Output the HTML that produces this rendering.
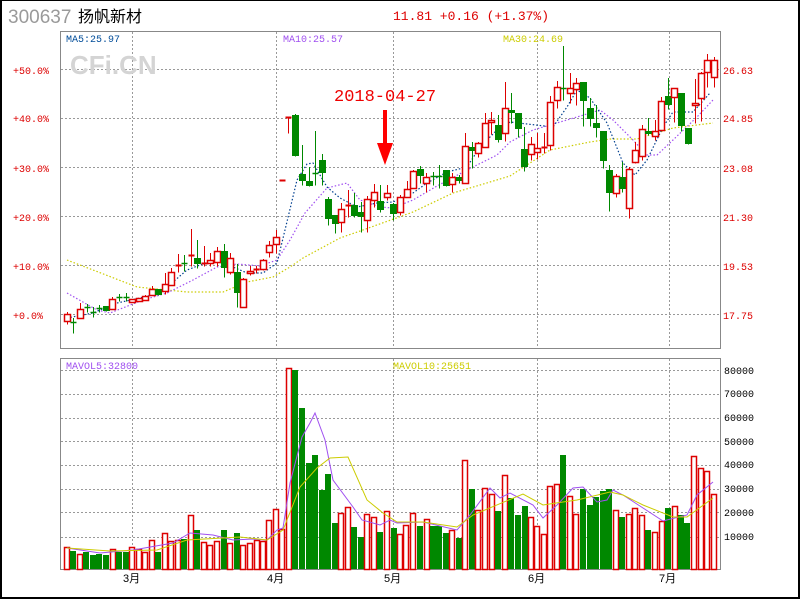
<!DOCTYPE html>
<html><head><meta charset="utf-8"><style>
html,body{margin:0;padding:0;background:#fff;}
#w{position:relative;width:796px;height:596px;border:2px solid #000;border-top:1px solid #000;overflow:hidden;}
svg{position:absolute;left:-2px;top:-1px;}
</style></head><body><div id="w">
<svg id="s" width="800" height="600" xmlns="http://www.w3.org/2000/svg" font-family="Liberation Mono, monospace">
<text x="8" y="23" font-family="Liberation Sans, sans-serif" font-size="19" fill="#9a9a9a">300637</text>
<text x="78" y="22" font-family="Liberation Sans, 'Noto Sans CJK SC', sans-serif" font-size="16" fill="#000">扬帆新材</text>
<text x="393" y="20" font-size="13" fill="#d00">11.81 +0.16 (+1.37%)</text>
<rect x="60.5" y="31.5" width="660" height="317" fill="none" stroke="#888"/>
<rect x="60.5" y="358.5" width="660" height="211" fill="none" stroke="#888"/>
<g id="grid" stroke="#999" stroke-dasharray="2,2" stroke-width="1"></g>
<text x="70" y="74" font-family="Liberation Sans, sans-serif" font-weight="bold" font-size="26" fill="#d4d4d4">CFi.CN</text>
<text x="66" y="42" font-size="10" fill="#004c99">MA5:25.97</text>
<text x="283" y="42" font-size="10" fill="#a050f0">MA10:25.57</text>
<text x="503" y="42" font-size="10" fill="#cccc00">MA30:24.69</text>
<text x="66" y="369" font-size="10" fill="#a050f0">MAVOL5:32800</text>
<text x="393" y="369" font-size="10" fill="#cccc00">MAVOL10:25651</text>
<g font-size="10" fill="#d00">
<text x="13" y="74">+50.0%</text><text x="13" y="122">+40.0%</text><text x="13" y="172">+30.0%</text>
<text x="13" y="221">+20.0%</text><text x="13" y="270">+10.0%</text><text x="13" y="319">+0.0%</text>
<text x="723" y="74">26.63</text><text x="723" y="122">24.85</text><text x="723" y="172">23.08</text>
<text x="723" y="221">21.30</text><text x="723" y="270">19.53</text><text x="723" y="319">17.75</text>
</g>
<g font-size="10" fill="#000">
<text x="724" y="374">80000</text><text x="724" y="397">70000</text><text x="724" y="421">60000</text>
<text x="724" y="445">50000</text><text x="724" y="468">40000</text><text x="724" y="492">30000</text>
<text x="724" y="516">20000</text><text x="724" y="540">10000</text>
</g>
<g font-size="11" fill="#000" font-family="Liberation Sans, 'Noto Sans CJK SC', sans-serif">
<text x="123" y="582">3月</text><text x="267" y="582">4月</text><text x="384" y="582">5月</text>
<text x="528" y="582">6月</text><text x="659" y="582">7月</text>
</g>
<text x="334" y="101" font-size="17" fill="#e00">2018-04-27</text>
<path d="M383 110 h4 v33 h6 l-8 22 l-8 -22 h6 z" fill="#f00"/>
<g id="c"></g>
</svg></div>
<script>
var s=document.getElementById('s'),NS='http://www.w3.org/2000/svg';
function el(p,t,a){var e=document.createElementNS(NS,t);for(var k in a)e.setAttribute(k,a[k]);p.appendChild(e);return e;}
var g=document.getElementById('grid');
[132,276,393,537,669].forEach(function(x){el(g,'line',{x1:x+.5,y1:32,x2:x+.5,y2:348});el(g,'line',{x1:x+.5,y1:359,x2:x+.5,y2:569});});
[69,118,167,216,265,314].forEach(function(y){el(g,'line',{x1:61,y1:y+.5,x2:720,y2:y+.5});});
[370,394,418,441,465,489,512,537].forEach(function(y){el(g,'line',{x1:61,y1:y+.5,x2:720,y2:y+.5});});
var c=document.getElementById('c');
var R='#d00',G='#008800';
var P=[['r',66.7,314,321,312,324],['g',73,322,322,318,333],['r',80,309,318,303,318],['g',87,307,307,304,312],['g',93,312,312,307,317],['g',99,308,308,305,312],['g',106,306,311,306,311],['r',112,299,309,297,309],['g',119,297,297,294,301],['g',126,297,297,293,301],['r',132,299,302,299,302],['r',139,298,301,298,301],['r',145,296,300,295,300],['r',152,289,295,286,295],['g',158,289,295,289,295],['r',165,284,291,273,294],['r',171,272,285,268,285],['r',178,265,265,254,272],['g',184,263,263,255,271],['r',191,255,255,229,266],['g',197,258,264,240,268],['r',204,263,263,246,266],['r',210,260,263,253,266],['r',217,251,262,247,266],['g',224,251,268,244,277],['r',230,258,272,253,274],['g',237,272,293,264,307],['r',243,279,307,278,307],['r',250,271,273,266,275],['r',256,269,269,266,273],['r',263,260,269,259,270],['r',269,245,252,241,257],['r',276,237,244,230,253],['r',282,180,180,180,180],['r',288,117,117,117,133],['g',295,115,156,114,156],['g',302,174,181,145,185],['g',309,181,186,167,186],['g',315,173,173,131,185],['g',322,160,173,154,185],['g',328,199,219,197,225],['g',335,215,224,215,233],['r',341,209,222,203,232],['r',348,205,205,190,217],['g',354,205,216,193,217],['g',361,212,217,202,232],['r',367,199,220,196,232],['r',374,192,200,184,207],['g',380,201,210,185,212],['r',387,193,197,185,200],['g',393,204,214,203,220],['r',400,197,212,195,215],['r',407,189,197,181,197],['r',413,171,188,170,188],['g',420,169,176,166,183],['r',426,177,183,173,192],['g',433,176,176,172,185],['g',439,176,176,165,188],['g',446,170,186,170,186],['r',452,177,184,173,192],['g',459,177,181,175,183],['r',465,146,183,133,183],['g',472,147,151,142,168],['r',478,143,153,142,157],['r',485,123,147,113,147],['r',491,120,122,112,134],['g',498,125,140,115,142],['r',505,108,133,82,141],['g',511,110,113,93,123],['g',518,113,129,113,137],['g',524,149,167,127,171],['r',531,144,154,137,160],['r',537,148,152,133,159],['r',544,147,147,133,153],['r',550,102,145,96,150],['r',557,87,100,81,108],['g',563,88,88,46,100],['r',570,88,93,73,103],['r',576,83,89,78,105],['g',583,82,101,82,126],['g',590,108,119,98,126],['g',596,123,128,105,137],['g',603,131,161,131,168],['g',609,170,193,165,211],['r',616,176,193,174,197],['g',622,177,189,162,192],['r',629,169,208,167,218],['r',635,150,162,142,163],['r',642,129,156,125,160],['g',648,131,134,118,135],['r',655,131,136,120,140],['r',661,101,130,97,130],['g',668,96,105,78,109],['r',674,88,97,88,122],['g',681,93,126,93,131],['g',688,128,144,128,144],['r',695,103,105,79,123],['r',701,73,98,72,121],['r',707,60,72,54,87],['r',714,60,77,57,87]];
function poly(pts,col,dash,w){el(c,'polyline',{points:pts,fill:'none',stroke:col,'stroke-width':w||1.2,'stroke-dasharray':dash||'none'});}
poly('67,260 93,270 137,287 187,292 223,292 247,282 273,277 290,267 303,258 340,238 363,230 413,212 453,193 480,185 510,176 550,150 590,142 610,139 637,139 673,128 713,123','#cccc00','1.5,2');
poly('67,293 97,310 110,313 143,300 167,293 193,280 217,267 237,264 260,266 277,260 290,240 305,213 327,188 347,183 360,200 380,207 393,208 413,200 437,186 467,170 497,155 510,142 533,130 577,117 600,110 613,120 633,140 647,155 657,155 673,140 697,117 713,100','#a050f0','1.5,2');
poly('67,318 93,313 117,303 140,298 160,293 187,270 213,260 233,267 247,273 263,273 277,263 285,230 297,180 307,164 313,163 327,187 340,198 357,207 377,203 393,202 413,193 427,183 447,172 467,167 480,147 497,130 510,122 553,127 567,107 577,90 590,98 607,123 623,163 635,175 647,160 663,127 673,112 693,112 710,93','#003f8f','1.5,2');
P.forEach(function(d){var x=Math.round(d[1])+.5,col=d[0]=='r'?R:G;
 el(c,'line',{x1:x,y1:d[4],x2:x,y2:d[5]+.5,stroke:col});
 var h=d[3]-d[2];
 if(h<1){el(c,'line',{x1:x-3,y1:d[2]+.5,x2:x+3,y2:d[2]+.5,stroke:col,'stroke-width':d[0]=='r'?2:1.5});}
 else if(d[0]=='r')el(c,'rect',{x:x-3,y:d[2]+.5,width:6,height:h,fill:'#fff',stroke:R,'stroke-width':1.5});
 else el(c,'rect',{x:x-3.5,y:d[2],width:7,height:h,fill:G});
});
var V=[['r',67,547],['g',73,551],['r',80,554],['g',86,552],['g',93,555],['g',99,554],['g',106,555],['r',113,549],['g',119,552],['g',126,552],['r',132,547],['r',139,549],['r',145,552],['r',152,540],['g',158,552],['r',165,533],['r',171,541],['r',178,540],['g',184,539],['r',191,515],['g',197,530],['r',204,542],['r',210,545],['r',217,541],['g',224,530],['r',230,543],['g',237,533],['r',243,545],['r',250,543],['r',257,540],['r',263,541],['r',269,520],['r',276,509],['r',282,529],['r',289,368],['g',295,370],['g',302,408],['g',309,463],['g',315,455],['g',322,490],['g',328,474],['g',335,523],['r',341,513],['r',348,507],['g',354,527],['g',361,537],['r',367,514],['r',374,517],['g',380,532],['r',387,511],['g',394,528],['r',400,534],['r',406,525],['r',413,513],['g',420,526],['r',427,519],['g',433,526],['g',439,526],['g',446,533],['r',452,530],['g',459,538],['r',465,460],['g',472,489],['r',478,510],['r',485,488],['r',492,494],['g',498,511],['r',505,475],['g',511,498],['g',518,515],['g',525,506],['r',531,517],['r',537,526],['r',544,534],['r',550,486],['r',557,484],['g',563,455],['r',570,496],['r',576,514],['g',583,489],['g',590,505],['g',596,497],['g',603,491],['g',609,489],['r',616,510],['g',622,517],['r',629,514],['r',635,508],['r',642,515],['g',648,530],['r',655,532],['r',662,521],['g',668,508],['r',675,506],['g',681,515],['g',687,523],['r',694,456],['r',701,468],['r',707,471],['r',714,494]];
V.forEach(function(d){var x=d[1];
 if(d[0]=='r')el(c,'rect',{x:x-2.5,y:d[2]+.5,width:5,height:569-d[2],fill:'#fff',stroke:R,'stroke-width':1.5});
 else el(c,'rect',{x:x-3,y:d[2],width:6,height:569-d[2],fill:G});});
poly('67,548 100,553 133,550 173,543 190,533 213,535 233,540 253,539 267,540 277,530 283,528 290,483 302,437 310,423 315,413 325,440 333,480 353,507 362,520 380,525 390,520 397,523 423,522 457,530 470,515 490,488 500,498 510,493 533,505 543,518 557,505 573,488 583,487 597,502 607,500 613,490 623,495 643,508 663,521 687,515 697,495 713,482','#a050f0',null,1);
poly('67,548 110,551 157,550 187,540 240,537 267,540 283,530 300,487 317,468 330,458 348,457 367,500 383,513 397,522 423,522 457,527 473,515 523,494 543,505 563,502 577,500 610,492 623,495 643,505 673,517 687,517 713,498','#cccc00',null,1);
</script></body></html>
